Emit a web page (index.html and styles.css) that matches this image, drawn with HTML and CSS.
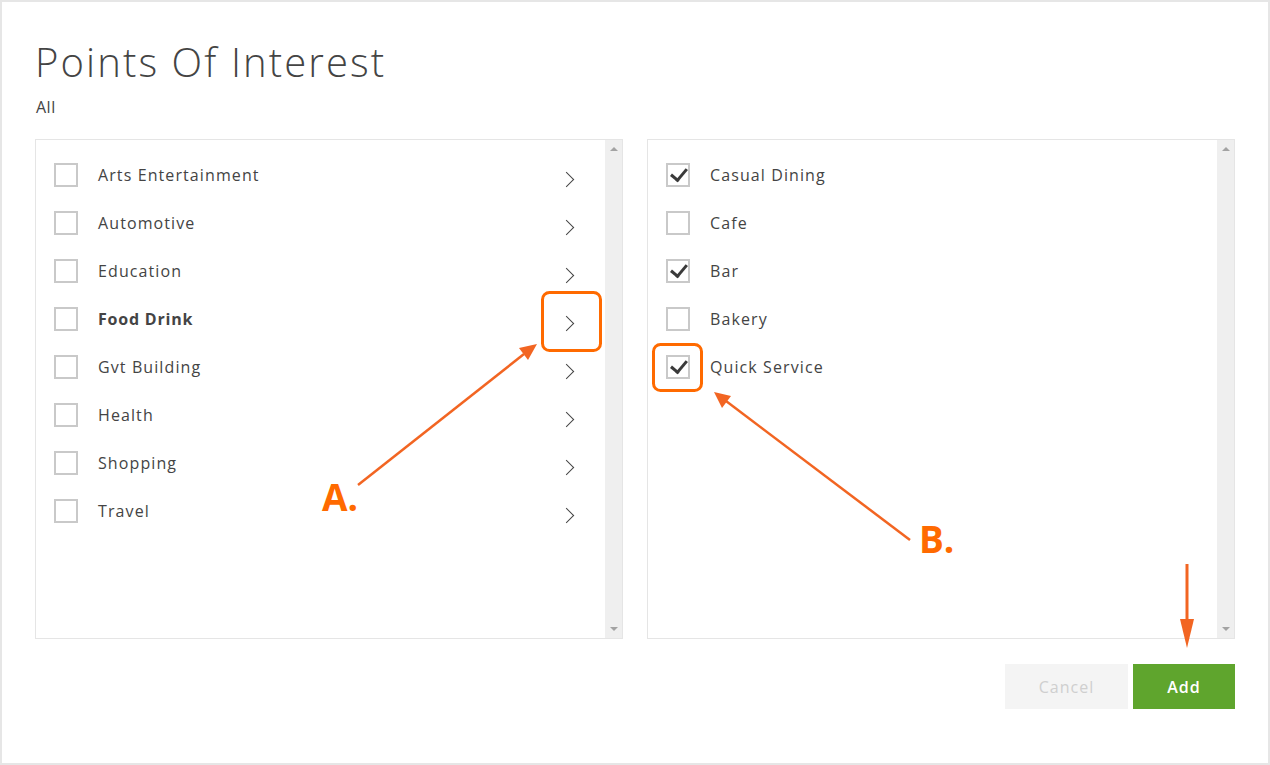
FILE: index.html
```html
<!DOCTYPE html>
<html lang="en">
<head>
    <meta charset="UTF-8">
    <meta name="viewport" content="width=device-width, initial-scale=1.0">
    <title>Points Of Interest</title>
    <link rel="stylesheet" href="styles.css">
</head>
<body>
    <!-- outer frame -->
    <div class="frame">
        <h1 class="title">Points Of Interest</h1>
        <div class="crumb">All</div>

        <div class="panels">
            <!-- categories -->
            <div class="panel">
                <ul class="list">
                    <li class="row"><span class="box"></span><span class="label">Arts Entertainment</span><span class="chev"></span></li>
                    <li class="row"><span class="box"></span><span class="label">Automotive</span><span class="chev"></span></li>
                    <li class="row"><span class="box"></span><span class="label">Education</span><span class="chev"></span></li>
                    <li class="row"><span class="box"></span><span class="label bold">Food Drink</span><span class="chev"></span></li>
                    <li class="row"><span class="box"></span><span class="label">Gvt Building</span><span class="chev"></span></li>
                    <li class="row"><span class="box"></span><span class="label">Health</span><span class="chev"></span></li>
                    <li class="row"><span class="box"></span><span class="label">Shopping</span><span class="chev"></span></li>
                    <li class="row"><span class="box"></span><span class="label">Travel</span><span class="chev"></span></li>
                </ul>
                <div class="scroll"><span class="up"></span><span class="down"></span></div>
            </div>

            <!-- sub categories -->
            <div class="panel">
                <ul class="list">
                    <li class="row"><span class="box checked"></span><span class="label">Casual Dining</span></li>
                    <li class="row"><span class="box"></span><span class="label">Cafe</span></li>
                    <li class="row"><span class="box checked"></span><span class="label">Bar</span></li>
                    <li class="row"><span class="box"></span><span class="label">Bakery</span></li>
                    <li class="row"><span class="box checked"></span><span class="label">Quick Service</span></li>
                </ul>
                <div class="scroll"><span class="up"></span><span class="down"></span></div>
            </div>
        </div>

        <div class="actions">
            <button class="btn cancel">Cancel</button>
            <button class="btn add">Add</button>
        </div>

        <!-- annotations drawn over the page -->
        <svg class="notes" width="1270" height="765" viewBox="0 0 1270 765">
            <rect x="542.5" y="292.5" width="58" height="58" rx="7" fill="none" stroke="#ff6a00" stroke-width="3"/>
            <rect x="653.5" y="344.5" width="48" height="46" rx="7" fill="none" stroke="#ff6a00" stroke-width="3"/>

            <line x1="358" y1="485" x2="524" y2="354" stroke="#f26522" stroke-width="2.5"/>
            <polygon points="537,344 519,348 528,360" fill="#f26522"/>

            <line x1="910" y1="540" x2="726" y2="401" stroke="#f26522" stroke-width="2.5"/>
            <polygon points="714,392 731,396 722,408" fill="#f26522"/>

            <line x1="1187" y1="564" x2="1187" y2="625" stroke="#f26522" stroke-width="3"/>
            <polygon points="1180,619 1194,619 1187,648" fill="#f26522"/>

            <text x="322" y="511" class="tag">A.</text>
            <text x="919" y="553" class="tag">B.</text>
        </svg>
    </div>
</body>
</html>
```

FILE: styles.css
```css
*{
    margin: 0;
    padding: 0;
    box-sizing: border-box;
}

body{
    font-family: "Open Sans", "Liberation Sans", sans-serif;
    color: #444;
    background-color: #fff;
}

/* outer frame */
.frame{
    position: relative;
    width: 1270px;
    height: 765px;
    border: 2px solid #e6e6e6;
    padding: 0 33px;
}

.title{
    font-weight: 300;
    font-size: 40px;
    line-height: 48px;
    margin-top: 36px;
    color: #444;
    letter-spacing: 2.1px;
}

.crumb{
    font-size: 16px;
    line-height: 20px;
    margin-top: 11px;
    margin-left: 1px;
    color: #444;
    letter-spacing: 0.5px;
}

.panels{
    display: flex;
    gap: 24px;
    margin-top: 22px;
}

.panel{
    width: 588px;
    height: 500px;
    border: 1px solid #e5e5e5;
    display: flex;
}

.list{
    list-style: none;
    flex: 1;
    padding: 11px 0 0 18px;
}

.row{
    display: flex;
    align-items: center;
    height: 48px;
}

.box{
    width: 24px;
    height: 24px;
    border: 2px solid #c9c9c9;
    flex-shrink: 0;
    position: relative;
}

/* checkmark */
.box.checked::after{
    content: "";
    position: absolute;
    left: 6px;
    top: 0px;
    width: 7px;
    height: 13px;
    border-right: 3px solid #3a3a3a;
    border-bottom: 3px solid #3a3a3a;
    transform: rotate(40deg);
}

.label{
    margin-left: 20px;
    font-size: 16px;
    letter-spacing: 1.1px;
    flex: 1;
}

.bold{
    font-weight: 700;
    letter-spacing: 0.8px;
}

/* arrow on the right */
.chev{
    width: 11px;
    height: 11px;
    border-right: 1.7px solid #444;
    border-top: 1.7px solid #444;
    transform: rotate(45deg);
    margin-top: 8px;
    margin-right: 33px;
}

.scroll{
    width: 17px;
    background-color: #efefef;
    display: flex;
    flex-direction: column;
    justify-content: space-between;
    align-items: center;
    padding: 7px 0 7px;
}

.up{
    border-left: 4px solid transparent;
    border-right: 4px solid transparent;
    border-bottom: 4px solid #a3a3a3;
}

.down{
    border-left: 4px solid transparent;
    border-right: 4px solid transparent;
    border-top: 4px solid #a3a3a3;
}

.actions{
    display: flex;
    justify-content: flex-end;
    gap: 5px;
    margin-top: 25px;
}

.btn{
    height: 45px;
    border: none;
    font-family: "Open Sans", "Liberation Sans", sans-serif;
    font-size: 16px;
    letter-spacing: 1px;
}

.cancel{
    width: 123px;
    background-color: #f4f4f4;
    color: #cfcfcf;
}

.add{
    width: 102px;
    background-color: #5fa52d;
    color: #fff;
    font-weight: 600;
}

.notes{
    position: absolute;
    left: -2px;
    top: -2px;
    pointer-events: none;
}

.tag{
    font-family: "Open Sans", "Liberation Sans", sans-serif;
    font-weight: 700;
    font-size: 37px;
    fill: #ff6a00;
}
```
